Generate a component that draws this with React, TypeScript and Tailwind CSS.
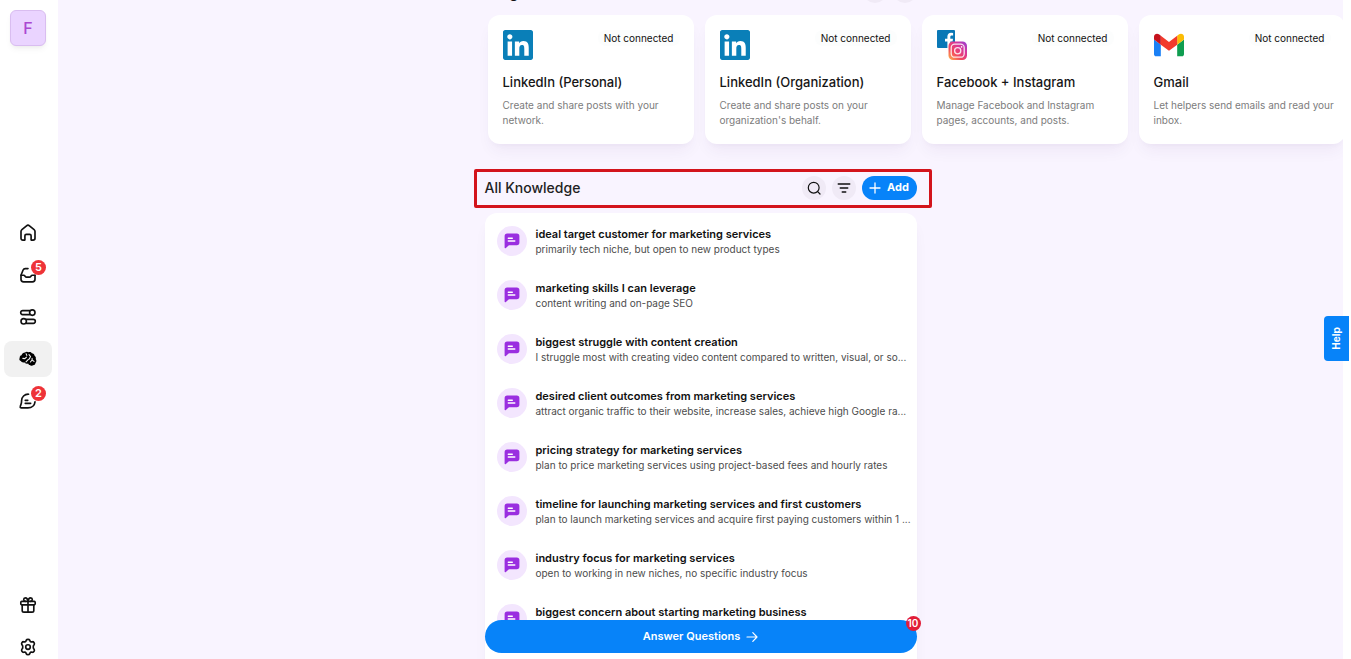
import type { ReactNode } from 'react';
import { clsx } from 'clsx';

interface Integration {
  name: string;
  description: string;
  logo: ReactNode;
}

interface KnowledgeItem {
  title: string;
  summary: string;
}

interface NavItemProps {
  label: string;
  icon: ReactNode;
  count?: number;
  active?: boolean;
}

const LinkedInLogo = () => (
  <svg viewBox="0 32 448 448" className="size-[30px]" fill="#0a7fb8" aria-hidden="true">
    <path d="M416 32H31.9C14.3 32 0 46.5 0 64.3v383.4C0 465.5 14.3 480 31.9 480H416c17.6 0 32-14.5 32-32.3V64.3c0-17.8-14.4-32.3-32-32.3zM135.4 416H69V202.2h66.5V416zm-33.2-243c-21.3 0-38.5-17.3-38.5-38.5S80.9 96 102.2 96c21.2 0 38.5 17.3 38.5 38.5 0 21.3-17.2 38.5-38.5 38.5zm282.1 243h-66.4V312c0-24.8-.5-56.7-34.5-56.7-34.6 0-39.9 27-39.9 54.9V416h-66.4V202.2h63.7v29.2h.9c8.9-16.8 30.6-34.5 62.9-34.5 67.2 0 79.7 44.3 79.7 101.9V416z" />
  </svg>
);

const MetaLogo = () => (
  <svg viewBox="0 0 30 30" className="size-[30px]" fill="none" aria-hidden="true">
    <defs>
      <linearGradient id="insta" x1="12" y1="30" x2="29" y2="12" gradientUnits="userSpaceOnUse">
        <stop offset="0" stopColor="#fdb44b" />
        <stop offset="0.35" stopColor="#f4495d" />
        <stop offset="0.7" stopColor="#d7369b" />
        <stop offset="1" stopColor="#9b3fd0" />
      </linearGradient>
    </defs>
    <rect width="18" height="18" rx="1" fill="#0a78b6" />
    <path d="M10.4 18v-6.6H8V8.7h2.4V6.6c0-2.5 1.5-3.8 3.7-3.8l2 .1v2.5h-1.3c-1.2 0-1.5.6-1.5 1.5v1.8h2.7l-.4 2.7h-2.3V18z" fill="#fff" />
    <rect x="11.5" y="11.5" width="18.5" height="18.5" rx="4.5" fill="url(#insta)" />
    <rect x="14.2" y="14.2" width="13" height="13" rx="3.5" stroke="#fff" strokeOpacity="0.85" strokeWidth="1.3" />
    <circle cx="20.7" cy="20.7" r="3.1" stroke="#fff" strokeOpacity="0.85" strokeWidth="1.3" />
    <circle cx="24.6" cy="16.9" r="0.8" fill="#fff" />
  </svg>
);

const GmailLogo = () => (
  <svg viewBox="52 31 88 88" className="size-[30px]" aria-hidden="true">
    <path fill="#1a80f5" d="M58 108h14V74L52 59v43c0 3.32 2.69 6 6 6" />
    <path fill="#0f9d50" d="M120 108h14c3.32 0 6-2.69 6-6V59l-20 15" />
    <path fill="#fbbc04" d="M120 48v26l20-15v-8c0-7.42-8.47-11.65-14.4-7.2" />
    <path fill="#f23a2c" d="M72 74V48l24 18 24-18v26L96 92" />
    <path fill="#c5121c" d="M52 51v8l20 15V48l-5.6-4.4c-5.94-4.45-14.4-.22-14.4 7.2" />
  </svg>
);

const LineIcon = ({ children }: { children: ReactNode }) => (
  <svg
    viewBox="0 0 18 18"
    className="size-[18px]"
    fill="none"
    stroke="currentColor"
    strokeWidth="1.65"
    strokeLinecap="round"
    strokeLinejoin="round"
    aria-hidden="true"
  >
    {children}
  </svg>
);

const HomeIcon = () => (
  <LineIcon>
    <path d="M2 7.6c0-.8.3-1.4.9-1.9l4.6-3.9c.9-.7 2.1-.7 3 0l4.6 3.9c.6.5.9 1.1.9 1.9v6.6c0 1.2-.7 1.9-1.9 1.9h-2v-4.3c0-.9-.5-1.4-1.4-1.4H7.3c-.9 0-1.4.5-1.4 1.4v4.3h-2C2.7 16.1 2 15.4 2 14.2z" />
  </LineIcon>
);

const InboxIcon = () => (
  <LineIcon>
    <path d="M9 2.6H6.2c-1 0-1.7.5-2.1 1.4L2 9.2v4c0 1.7.9 2.6 2.6 2.6h8.8c1.7 0 2.6-.9 2.6-2.6V9.2" />
    <path d="M2 9.2h2.6c.8 0 1.1.4 1.5 1s.8.9 1.5.9h2.8c.7 0 1.1-.3 1.5-.9s.7-1 1.5-1H16" />
  </LineIcon>
);

const TasksIcon = () => (
  <LineIcon>
    <path d="M10.6 2.6H3.7a2 2 0 0 0 0 4h6.9" />
    <circle cx="13.3" cy="4.6" r="2.7" />
    <path d="M7.4 11.3h6.9a2 2 0 0 1 0 4H7.4" />
    <circle cx="4.7" cy="13.3" r="2.7" />
  </LineIcon>
);

const BrainIcon = () => (
  <svg viewBox="0 0 20 18" className="h-[18px] w-5" fill="none" aria-hidden="true">
    <path
      d="M7 2.4c1.1-.8 2.5-.8 3.5-.1 1.3-.6 2.7-.1 3.4 1 1.5.1 2.5 1.1 2.7 2.4 1.2.8 1.6 2.2 1.1 3.4 1 1.3.9 2.9-.2 3.9-.2 1.5-1.3 2.3-2.6 2.2-.9.9-2.3.9-3.1-.1-.9-.2-1.4-.8-1.7-1.6-1.6.6-3.1.1-3.8-1.2-1.5.5-2.9-.1-3.5-1.3C1.3 10.6 1 9.2 1.7 8.1 1.5 6.7 2.2 5.6 3.5 5.3 3.9 3.6 5.4 2.5 7 2.4z"
      fill="#000"
    />
    <path
      d="M4.8 8.4l2 .2 1.7-1.5M8.1 3.8l.7 1.6M10.4 9.4L8 11.9M11 4.6l1.5 1.9-1.2 2.6M12.4 12l1.7-2 1.9 1.4M14.1 10V8.4"
      stroke="#f1f1f1"
      strokeWidth="1.1"
      strokeLinecap="round"
    />
  </svg>
);

const ChatIcon = () => (
  <LineIcon>
    <path d="M9.6 2.2C5.5 2 2.6 5 2.6 8.6c0 1.4-.1 2.6-.6 3.8l-.7 1.9c-.4 1 .1 1.6 1.1 1.6h6.5c4 0 6.8-2.5 7.1-6" />
    <path d="M6.2 8.3h2.6M6.2 11.3h5.5" />
  </LineIcon>
);

const GiftIcon = () => (
  <LineIcon>
    <rect x="1.8" y="5.4" width="14.4" height="3.4" rx="1" />
    <path d="M3.2 8.8v5.6c0 1.1.6 1.7 1.7 1.7h8.2c1.1 0 1.7-.6 1.7-1.7V8.8M9 5.4v10.7" />
    <path d="M9 5.4C8.6 3 7.6 1.8 6.3 1.9 4.2 2 4.1 5.1 6.3 5.4M9 5.4c.4-2.4 1.4-3.6 2.7-3.5 2.1.1 2.2 3.2 0 3.5" />
  </LineIcon>
);

const SettingsIcon = () => (
  <LineIcon>
    <path d="M7.3 2.2c.5-1.1 2.9-1.1 3.4 0l.5 1.1c.2.4.6.6 1 .6l1.3-.2c1.2-.1 2.4 1.9 1.7 2.9l-.8 1.1c-.2.8-.2 1.8 0 2.6l.8 1.1c.7 1-.5 3-1.7 2.9l-1.3-.2c-.4 0-.8.2-1 .6l-.5 1.1c-.5 1.1-2.9 1.1-3.4 0l-.5-1.1c-.2-.4-.6-.6-1-.6l-1.3.2c-1.2.1-2.4-1.9-1.7-2.9l.8-1.1c.2-.8.2-1.8 0-2.6l-.8-1.1c-.7-1 .5-3 1.7-2.9l1.3.2c.4 0 .8-.2 1-.6z" />
    <circle cx="9" cy="9" r="2.3" />
  </LineIcon>
);

const MessageIcon = () => (
  <svg viewBox="0 0 16 16" className="size-4" fill="none" aria-hidden="true">
    <path d="M3.2.6h9.6a2.6 2.6 0 0 1 2.6 2.6v6.4a2.6 2.6 0 0 1-2.6 2.6H5.9c-.5 0-.9.1-1.3.4l-2.7 2.3c-.7.5-1.3.3-1.3-.5V3.2A2.6 2.6 0 0 1 3.2.6z" fill="#9a2ee0" />
    <path d="M4.3 5.2h4M4.3 8h6.5" stroke="#fff" strokeWidth="1.4" strokeLinecap="round" />
  </svg>
);

const integrations: Integration[] = [
  {
    name: 'LinkedIn (Personal)',
    description: 'Create and share posts with your network.',
    logo: <LinkedInLogo />,
  },
  {
    name: 'LinkedIn (Organization)',
    description: "Create and share posts on your organization's behalf.",
    logo: <LinkedInLogo />,
  },
  {
    name: 'Facebook + Instagram',
    description: 'Manage Facebook and Instagram pages, accounts, and posts.',
    logo: <MetaLogo />,
  },
  {
    name: 'Gmail',
    description: 'Let helpers send emails and read your inbox.',
    logo: <GmailLogo />,
  },
];

const knowledge: KnowledgeItem[] = [
  {
    title: 'ideal target customer for marketing services',
    summary: 'primarily tech niche, but open to new product types',
  },
  {
    title: 'marketing skills I can leverage',
    summary: 'content writing and on-page SEO',
  },
  {
    title: 'biggest struggle with content creation',
    summary: 'I struggle most with creating video content compared to written, visual, or so...',
  },
  {
    title: 'desired client outcomes from marketing services',
    summary: 'attract organic traffic to their website, increase sales, achieve high Google ra...',
  },
  {
    title: 'pricing strategy for marketing services',
    summary: 'plan to price marketing services using project-based fees and hourly rates',
  },
  {
    title: 'timeline for launching marketing services and first customers',
    summary: 'plan to launch marketing services and acquire first paying customers within 1 ...',
  },
  {
    title: 'industry focus for marketing services',
    summary: 'open to working in new niches, no specific industry focus',
  },
  {
    title: 'biggest concern about starting marketing business',
    summary: '',
  },
];

const NavItem = ({ label, icon, count, active }: NavItemProps) => (
  <a
    href="#"
    aria-label={label}
    className={clsx(
      'relative flex h-9 w-12 items-center justify-center rounded-lg',
      active && 'bg-[#f1f1f1]',
    )}
  >
    {icon}
    {count && (
      <span className="absolute top-[3px] right-1.5 flex size-[15px] items-center justify-center rounded-full bg-[#ee3338] text-[11px] font-semibold text-white">
        {count}
      </span>
    )}
  </a>
);

const Sidebar = () => (
  <aside className="flex w-[58px] shrink-0 flex-col items-center justify-between bg-white pt-2.5 pr-0.5">
    <button
      type="button"
      className="flex size-9 items-center justify-center rounded-md border border-[#d9bdf0] bg-[#ead4ff] text-base font-medium text-[#ab47d1] shadow-md shadow-black/5"
    >
      F
    </button>
    <nav className="flex flex-col gap-1.5">
      <NavItem label="Home" icon={<HomeIcon />} />
      <NavItem label="Inbox" icon={<InboxIcon />} count={5} />
      <NavItem label="Tasks" icon={<TasksIcon />} />
      <NavItem label="Brain" icon={<BrainIcon />} active />
      <NavItem label="Chat" icon={<ChatIcon />} count={2} />
    </nav>
    <nav className="-mb-1.5 flex flex-col gap-1.5">
      <NavItem label="Rewards" icon={<GiftIcon />} />
      <NavItem label="Settings" icon={<SettingsIcon />} />
    </nav>
  </aside>
);

const IntegrationCard = ({ name, description, logo }: Integration) => (
  <article className="w-[206px] shrink-0 rounded-xl bg-white pt-[15px] pr-2.5 pb-4 pl-[15px] shadow-lg shadow-purple-950/5">
    <div className="flex items-start justify-between pr-1">
      {logo}
      <span className="rounded-full bg-[#fcfdfd] px-1.5 text-[10px] leading-4 text-[#111]">
        Not connected
      </span>
    </div>
    <h3 className="mt-3.5 text-[13px] leading-4 font-medium text-[#161616]">{name}</h3>
    <p className="mt-2 text-[10px] leading-[15px] text-[#7c7c7c]">{description}</p>
  </article>
);

const KnowledgeRow = ({ title, summary }: KnowledgeItem) => (
  <li className="flex h-[54px] items-center gap-[9px] px-3">
    <span className="flex size-[30px] shrink-0 items-center justify-center rounded-full bg-[#f3e6fe]">
      <MessageIcon />
    </span>
    <div className="min-w-0 pt-0.5">
      <h3 className="text-[11px] leading-[15px] font-semibold whitespace-nowrap text-[#111]">
        {title}
      </h3>
      <p className="h-[15px] text-[10px] leading-[15px] whitespace-nowrap text-[#4c4c4c]">
        {summary}
      </p>
    </div>
  </li>
);

export default function App() {
  return (
    <div className="flex h-screen overflow-hidden bg-white font-['Inter','Liberation_Sans',sans-serif] text-[#111]">
      <Sidebar />

      <main className="relative mr-2 flex-1 overflow-hidden bg-[#f9f4ff]">
        <div className="mx-auto -mt-[21px] w-[432px]">
          <div className="flex h-6 items-end justify-between">
            <h2 className="text-sm leading-5 font-medium">Integrations</h2>
            <div className="flex gap-1.5">
              <button type="button" aria-label="Previous" className="size-6 rounded-full bg-[#f0eaf6]" />
              <button type="button" aria-label="Next" className="size-6 rounded-full bg-[#f0eaf6]" />
            </div>
          </div>

          <div className="mt-3 ml-[3px] flex gap-[11px]">
            {integrations.map((item) => (
              <IntegrationCard key={item.name} {...item} />
            ))}
          </div>

          <div className="mt-[25px] -mr-[15px] -ml-[11px] flex h-[39px] items-center justify-between rounded-xs border-3 border-[#d3141c] pr-3 pb-0.5 pl-2">
            <h2 className="text-sm font-medium text-[#222]">All Knowledge</h2>
            <div className="flex items-center gap-1.5">
              <button
                type="button"
                aria-label="Search"
                className="flex size-6 items-center justify-center rounded-full bg-[#f0eaf6]"
              >
                <svg viewBox="0 0 14 14" className="size-3.5" fill="none" stroke="currentColor" strokeWidth="1.2" strokeLinecap="round">
                  <circle cx="6.7" cy="6.7" r="5.4" />
                  <path d="M10.7 10.7l2.3 2.3" />
                </svg>
              </button>
              <button
                type="button"
                aria-label="Filter"
                className="flex size-6 items-center justify-center rounded-full bg-[#f0eaf6]"
              >
                <svg viewBox="0 0 14 14" className="size-3.5" fill="none" stroke="currentColor" strokeWidth="1.3" strokeLinecap="round">
                  <path d="M1.2 3h11.6M3.2 7h7.6M5.2 11h3.6" />
                </svg>
              </button>
              <button
                type="button"
                className="flex h-6 w-[55px] items-center justify-center gap-1.5 rounded-full bg-[#0783f9] text-[11px] font-bold text-white"
              >
                <svg viewBox="0 0 12 12" className="size-3" fill="none" stroke="currentColor" strokeWidth="1.3" strokeLinecap="round">
                  <path d="M6 1v10M1 6h10" />
                </svg>
                Add
              </button>
            </div>
          </div>

          <ul className="mt-[5px] rounded-xl bg-white pt-px pb-12 shadow-lg shadow-purple-950/5">
            {knowledge.map((item) => (
              <KnowledgeRow key={item.title} {...item} />
            ))}
          </ul>
        </div>

        <div className="absolute inset-x-0 bottom-1.5 flex justify-center">
          <button
            type="button"
            className="relative flex h-[33px] w-[432px] items-center justify-center gap-1.5 rounded-full bg-[#0783f9] text-[11px] font-semibold text-white"
          >
            Answer Questions
            <svg viewBox="0 0 12 12" className="size-3" fill="none" stroke="currentColor" strokeWidth="1.2" strokeLinecap="round" strokeLinejoin="round">
              <path d="M1 6h10M6.8 1.6L11 6l-4.2 4.4" />
            </svg>
            <span className="absolute -top-1 -right-1 flex size-[15px] items-center justify-center rounded-full bg-[#e11d38] text-[10px] font-semibold">
              10
            </span>
          </button>
        </div>
      </main>

      <button
        type="button"
        className="fixed top-[316px] right-0.5 flex h-[45px] w-[25px] items-center justify-center rounded-l bg-[#0783f9] text-[10px] font-bold text-white"
      >
        <span className="-rotate-90">Help</span>
      </button>
    </div>
  );
}
